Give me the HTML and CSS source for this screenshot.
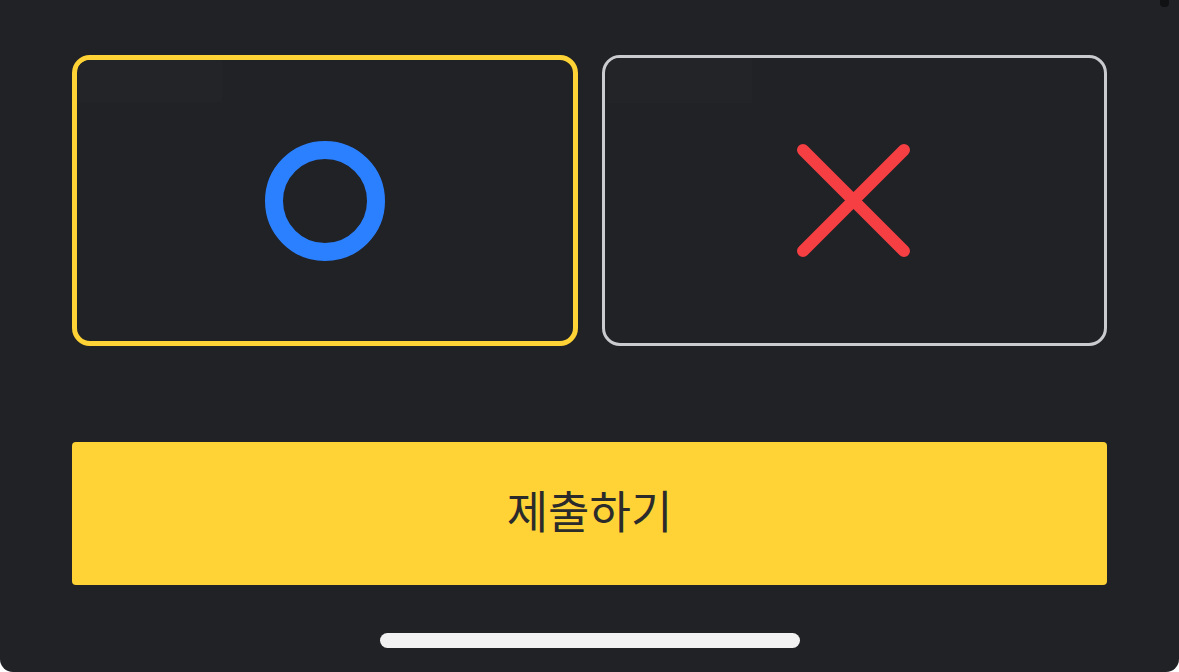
FILE: index.html
```html
<!DOCTYPE html>
<html lang="ko">
  <head>
    <meta charset="UTF-8" />
    <title>OX 퀴즈</title>
    <link rel="stylesheet" href="styles.css">
  </head>
  <body>
    <!-- 시트 -->
    <div class="sheet">
      <span class="notch"></span>
      <!-- OX 선택 -->
      <div class="choices">
        <button class="choice is-selected" type="button">
          <svg width="120" height="120" viewBox="0 0 120 120">
            <circle cx="60" cy="60" r="51" fill="none" stroke="#2b80ff" stroke-width="18" />
          </svg>
        </button>
        <button class="choice" type="button">
          <svg width="120" height="120" viewBox="0 0 120 120">
            <path d="M9 9 L110 110 M110 9 L9 110" stroke="#f53f43" stroke-width="12" stroke-linecap="round" fill="none" />
          </svg>
        </button>
      </div>
      <!-- 제출 버튼 -->
      <button class="submit" type="button">제출하기</button>
      <!-- 홈 인디케이터 -->
      <div class="home-bar"></div>
    </div>
  </body>
</html>
```

FILE: styles.css
```css
/* 초기화 */
html,
body {
  margin: 0;
  padding: 0;
}
body {
  background-color: #fff;
  font-family: "Noto Sans CJK KR", "Noto Sans", sans-serif;
}
button {
  font-family: inherit;
  border: 0;
  padding: 0;
  margin: 0;
}

/* 시트 */
.sheet {
  position: relative;
  box-sizing: border-box;
  height: 672px;
  padding: 55px 72px 0;
  display: flex;
  flex-direction: column;
  background-color: #212225;
  border-radius: 0 0 13px 13px;
}
/* 오른쪽 위 작은 표시 */
.notch {
  position: absolute;
  top: -4px;
  right: 10px;
  width: 9px;
  height: 11px;
  border-radius: 4px;
  background-color: #111214;
}

/* OX 선택 */
.choices {
  display: grid;
  grid-template-columns: 1fr 1fr;
  gap: 24px;
  height: 291px;
}
.choice {
  box-sizing: border-box;
  display: flex;
  align-items: center;
  justify-content: center;
  background-color: #212225;
  border: 3px solid #c9cbce;
  border-radius: 18px;
  overflow: hidden;
  position: relative;
}
/* 카드 안쪽 희미한 박스 */
.choice::before {
  content: '';
  position: absolute;
  top: 0;
  left: 3px;
  width: 144px;
  height: 45px;
  background-color: #232427;
}
.choice.is-selected {
  border: 5px solid #ffd335;
}
.choice.is-selected::before {
  left: 1px;
  height: 42px;
}
.choice svg {
  position: relative;
}

/* 제출 버튼 */
.submit {
  margin-top: 96px;
  height: 143px;
  padding-bottom: 8px;
  border-radius: 4px;
  background-color: #ffd335;
  color: #2b2b2b;
  font-size: 45px;
  font-weight: 400;
}

/* 홈 인디케이터 */
.home-bar {
  align-self: center;
  width: 420px;
  height: 15px;
  margin-top: 48px;
  border-radius: 8px;
  background-color: #f2f2f2;
}
```
